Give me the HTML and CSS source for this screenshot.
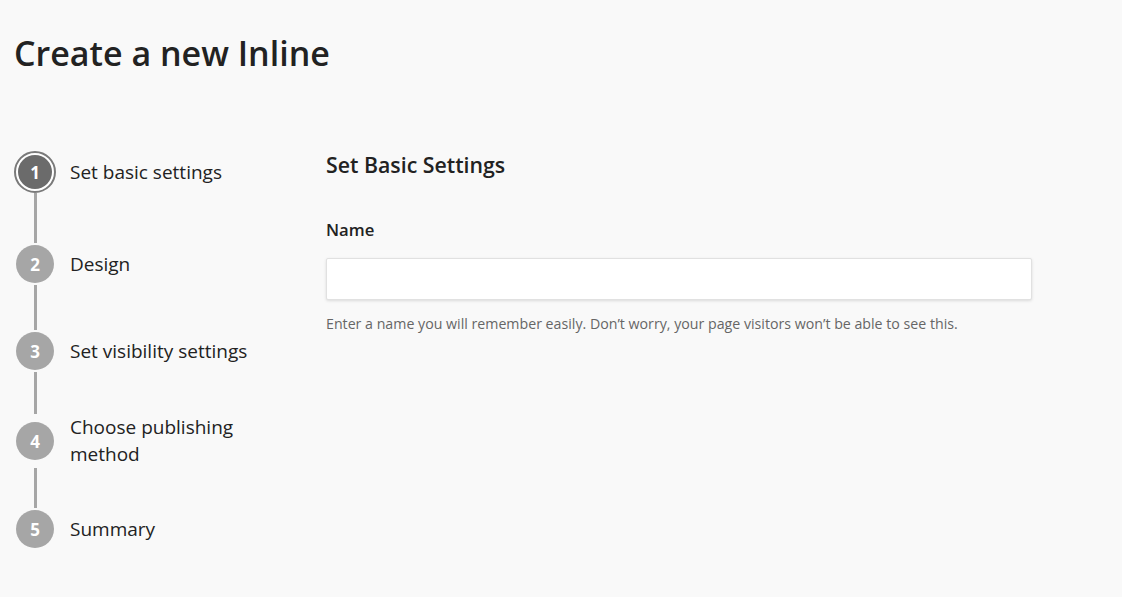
FILE: index.html
```html
<!DOCTYPE html>
<html>
<head>
<meta charset="utf-8">
<link rel="stylesheet" href="styles.css">
</head>
<body>
<div class="page">
  <h1 class="title">Create a new Inline</h1>
  <div class="wizard">
    <div class="steps">
      <div class="step">
        <div class="marker"><div class="circle current"><span>1</span></div></div>
        <div class="label">Set basic settings</div>
      </div>
      <div class="connector c1"></div>
      <div class="step">
        <div class="marker"><div class="circle">2</div></div>
        <div class="label">Design</div>
      </div>
      <div class="connector c2"></div>
      <div class="step">
        <div class="marker"><div class="circle">3</div></div>
        <div class="label">Set visibility settings</div>
      </div>
      <div class="connector c3"></div>
      <div class="step">
        <div class="marker"><div class="circle">4</div></div>
        <div class="label">Choose publishing<br>method</div>
      </div>
      <div class="connector c4"></div>
      <div class="step">
        <div class="marker"><div class="circle">5</div></div>
        <div class="label">Summary</div>
      </div>
    </div>
    <div class="content">
      <h2 class="section-title">Set Basic Settings</h2>
      <label class="field-label" for="name">Name</label>
      <input class="text-input" id="name" type="text">
      <p class="help">Enter a name you will remember easily. Don’t worry, your page visitors won’t be able to see this.</p>
    </div>
  </div>
</div>
</body>
</html>
```
FILE: styles.css
```css
html, body {
  margin: 0;
  padding: 0;
  background: #f9f9f9;
}
body {
  font-family: "Open Sans", "Noto Sans", sans-serif;
  color: #222;
}
.page {
  padding: 0 0 0 14px;
}
.title {
  margin: 0;
  padding-top: 30px;
  font-size: 34px;
  line-height: 46px;
  font-weight: 600;
  color: #222;
}
.wizard {
  display: flex;
  margin-top: 75px;
}
.steps {
  width: 312px;
  display: flex;
  flex-direction: column;
}
.step {
  display: flex;
  align-items: center;
}
.marker {
  width: 42px;
  height: 42px;
  display: flex;
  align-items: center;
  justify-content: center;
  flex: none;
}
.circle {
  width: 38px;
  height: 38px;
  border-radius: 50%;
  background: #a6a6a6;
  color: #fff;
  font-size: 17px;
  font-weight: 700;
  display: flex;
  align-items: center;
  justify-content: center;
}
.circle.current {
  width: 42px;
  height: 42px;
  box-sizing: border-box;
  background: #fff;
  border: 2px solid #7a7a7a;
  padding: 2px;
}
.circle.current span {
  width: 100%;
  height: 100%;
  border-radius: 50%;
  background: #6b6b6b;
  display: flex;
  align-items: center;
  justify-content: center;
}
.label {
  margin-left: 14px;
  font-size: 19px;
  line-height: 27px;
  color: #222;
}
.connector {
  width: 3px;
  margin-left: 20px;
  background: #a6a6a6;
}
.c1 { height: 50px; }
.c2 { height: 45px; }
.c3 { height: 42px; }
.c4 { height: 40px; }
.content {
  width: 706px;
  display: flex;
  flex-direction: column;
}
.section-title {
  margin: 0;
  font-size: 21.3px;
  line-height: 28px;
  font-weight: 600;
  color: #222;
}
.field-label {
  margin-top: 40px;
  font-size: 16.7px;
  line-height: 22px;
  font-weight: 600;
  color: #222;
}
.text-input {
  margin-top: 17px;
  height: 42px;
  box-sizing: border-box;
  border: 1px solid #e1e1e1;
  border-radius: 2px;
  background: #fff;
  box-shadow: 0 1px 3px rgba(0,0,0,0.12);
  font: inherit;
  padding: 0 10px;
}
.help {
  margin: 14px 0 0;
  font-size: 14.2px;
  line-height: 20px;
  color: #666;
}
```
